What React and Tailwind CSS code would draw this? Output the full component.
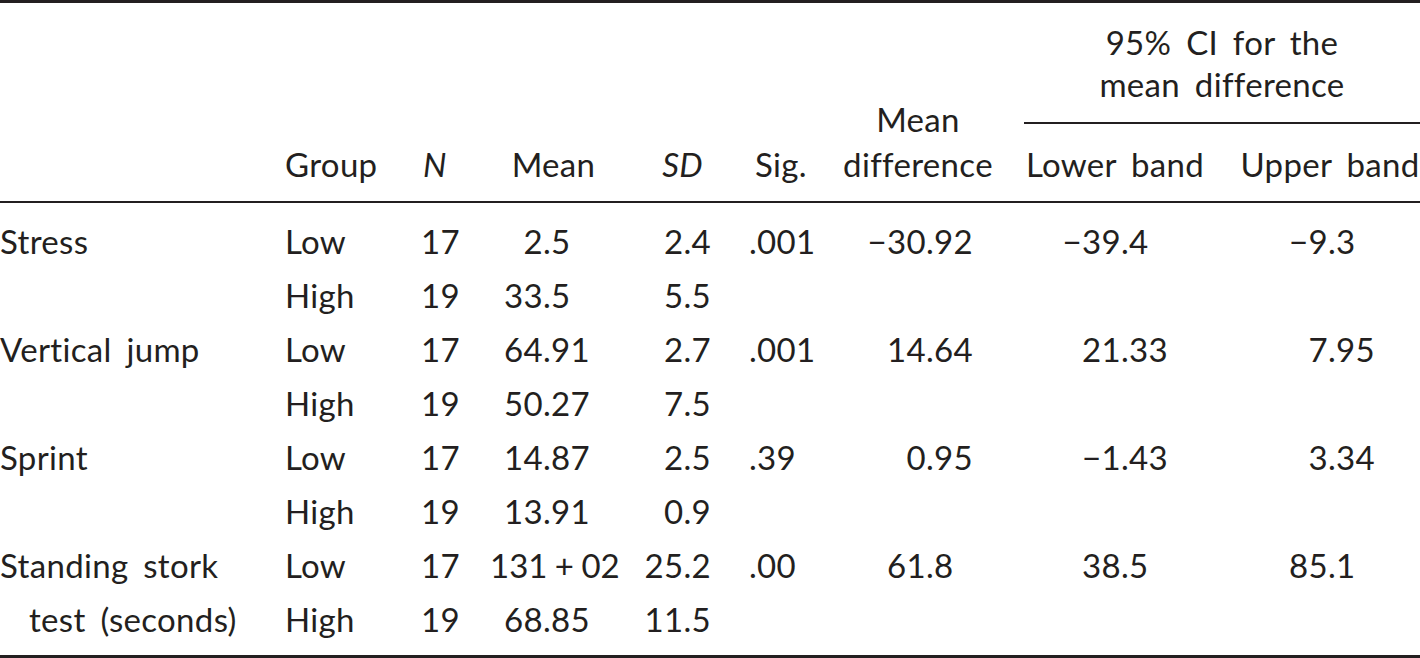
import React from "react";

const rows = [
  { label: "Stress", group: "Low", n: "17", mean: "2.5", sd: "2.4", sig: ".001", diff: "−30.92", lower: "−39.4", upper: "−9.3" },
  { group: "High", n: "19", mean: "33.5", sd: "5.5" },
  { label: "Vertical jump", group: "Low", n: "17", mean: "64.91", sd: "2.7", sig: ".001", diff: "14.64", lower: "21.33", upper: "7.95" },
  { group: "High", n: "19", mean: "50.27", sd: "7.5" },
  { label: "Sprint", group: "Low", n: "17", mean: "14.87", sd: "2.5", sig: ".39", diff: "0.95", lower: "−1.43", upper: "3.34" },
  { group: "High", n: "19", mean: "13.91", sd: "0.9" },
  { label: "Standing stork", group: "Low", n: "17", mean: "131 + 02", sd: "25.2", sig: ".00", diff: "61.8", lower: "38.5", upper: "85.1" },
  { label: "test (seconds)", indent: true, group: "High", n: "19", mean: "68.85", sd: "11.5" },
];

// pads one-decimal numbers so the decimal points line up with two-decimal ones
const Num = ({ v }) => {
  if (!v) return null;
  const frac = v.split(".")[1];
  return (
    <>
      {v}
      {frac && frac.length === 1 && <span className="invisible">0</span>}
    </>
  );
};

const App = () => {
  return (
    <div className="w-[1420px] h-[658px] bg-white text-[#231f20] font-['Lato',sans-serif] text-[33px] tracking-[0.01em] [word-spacing:6px] overflow-hidden">
      <div className="h-[3px] bg-[#231f20]" />

      <div className="flex h-[198px] leading-[42px]">
        <div className="w-[285px]" />
        <div className="w-[136px] flex flex-col justify-end pb-[16px]">Group</div>
        <div className="w-[69px] flex flex-col justify-end pb-[16px] pl-[2px] italic">N</div>
        <div className="w-[127px] flex flex-col justify-end pb-[16px] text-center">Mean</div>
        <div className="w-[98px] flex flex-col justify-end pb-[16px] pr-[12px] text-right italic">SD</div>
        <div className="w-[115px] flex flex-col justify-end pb-[16px] pl-[40px]">Sig.</div>
        <div className="w-[194px] flex flex-col justify-end pb-[14px] pr-[18px] text-center leading-[45px]">
          <span>Mean</span>
          <span>difference</span>
        </div>
        <div className="w-[396px] flex flex-col justify-end pb-[16px]">
          <div className="text-center">
            <div>95% CI for the</div>
            <div>mean difference</div>
          </div>
          <div className="mt-[17px] h-[2px] bg-[#231f20]" />
          <div className="mt-[19px] flex whitespace-nowrap">
            <div className="w-[198px] pr-[16px] text-center">Lower band</div>
            <div className="w-[198px] pl-[18px] text-center">Upper band</div>
          </div>
        </div>
      </div>

      <div className="h-[2px] bg-[#231f20]" />

      <div className="mt-[11px]">
        {rows.map((r, i) => (
          <div key={i} className="flex h-[54px] leading-[54px] whitespace-nowrap">
            <div className={`w-[285px] ${r.indent ? "pl-[29px]" : ""}`}>{r.label}</div>
            <div className="w-[136px]">{r.group}</div>
            <div className="w-[69px]">{r.n}</div>
            <div
              className={`w-[127px] text-right ${
                r.mean.includes("+") ? "pr-[2px] [word-spacing:-1px] tracking-normal" : "pr-[27px]"
              }`}
            >
              <Num v={r.mean} />
            </div>
            <div className="w-[98px] pr-[4px] text-right">{r.sd}</div>
            <div className="w-[115px] pl-[34px]">{r.sig}</div>
            <div className="w-[194px] pr-[51px] text-right">
              <Num v={r.diff} />
            </div>
            <div className="w-[198px] pr-[54px] text-right">
              <Num v={r.lower} />
            </div>
            <div className="w-[198px] pr-[45px] text-right">
              <Num v={r.upper} />
            </div>
          </div>
        ))}
      </div>

      <div className="mt-[9px] h-[3px] bg-[#231f20]" />
    </div>
  );
};

export default App;
